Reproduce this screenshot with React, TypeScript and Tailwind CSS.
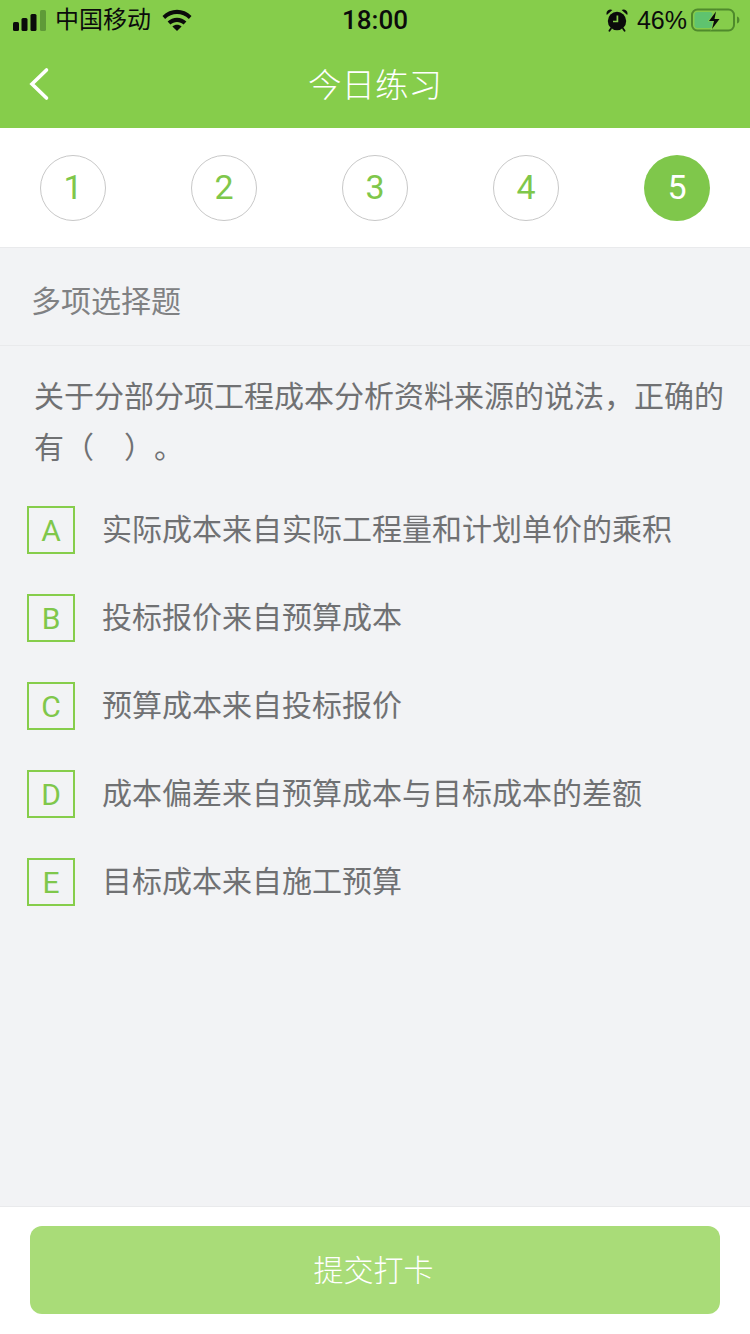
import React from 'react'

const cjk = '"Liberation Sans", "Noto Sans CJK SC", sans-serif'

const steps = [1, 2, 3, 4, 5]
const options = [
  { key: 'A', text: '实际成本来自实际工程量和计划单价的乘积' },
  { key: 'B', text: '投标报价来自预算成本' },
  { key: 'C', text: '预算成本来自投标报价' },
  { key: 'D', text: '成本偏差来自预算成本与目标成本的差额' },
  { key: 'E', text: '目标成本来自施工预算' },
]

function Signal() {
  return (
    <svg width="34" height="21" viewBox="0 0 34 21" className="shrink-0">
      <rect x="0" y="12" width="6" height="9" rx="1.5" fill="#0b0b0b" />
      <rect x="8.5" y="8" width="6" height="13" rx="1.5" fill="#0b0b0b" />
      <rect x="17.5" y="4" width="6" height="17" rx="1.5" fill="#0b0b0b" />
      <rect x="27" y="0" width="6" height="21" rx="1.5" fill="#5f9a38" />
    </svg>
  )
}

function Wifi() {
  return (
    <svg width="30" height="22" viewBox="0 0 30 22" className="shrink-0">
      <path d="M0.5 7C8.6-1.4 21.4-1.4 29.5 7l-2.6 3C20.2 3.4 9.8 3.4 3.1 10z" fill="#0b0b0b" />
      <path d="M5.6 12.6c5.2-5.2 13.6-5.2 18.8 0l-2.8 3c-3.6-3.4-9.6-3.4-13.2 0z" fill="#0b0b0b" />
      <path d="M10.4 17.6c2.6-2.4 6.6-2.4 9.2 0L15 22z" fill="#0b0b0b" />
    </svg>
  )
}

function Alarm() {
  return (
    <svg width="22" height="24" viewBox="0 0 22 24" className="shrink-0">
      <circle cx="11" cy="13" r="9.2" fill="#0b0b0b" />
      <path d="M0.8 7a4 4 0 0 1 5.6-5zM21.2 7a4 4 0 0 0-5.6-5z" fill="#0b0b0b" />
      <path d="M5 20.5l-1.6 2.2M17 20.5l1.6 2.2" stroke="#0b0b0b" strokeWidth="1.8" strokeLinecap="round" />
      <path d="M11.4 7.5v6H7" stroke="#86cd4b" strokeWidth="1.7" fill="none" />
    </svg>
  )
}

function Battery() {
  return (
    <svg width="49" height="24" viewBox="0 0 49 24" className="shrink-0">
      <rect x="1" y="1.5" width="42" height="21" rx="5.5" fill="none" stroke="#4f8a2c" strokeWidth="2" />
      <rect x="3.5" y="4" width="18" height="16" rx="3" fill="#5fc36f" />
      <path d="M46 8.5c1.8.6 2.4 1.8 2.4 3.5s-.6 2.9-2.4 3.5z" fill="#4f8a2c" />
      <path d="M25.5 1.5L16.5 13.5h5.5L19.5 23l9.5-12.5h-5.5z" fill="#86cd4b" />
      <path d="M25 3.5L18 13h5l-2 8l7.5-10h-5z" fill="#0b0b0b" />
    </svg>
  )
}

function StatusBar() {
  return (
    <div className="flex h-10 items-center text-[#0b0b0b]">
      <div className="flex flex-1 items-center pl-[13px]">
        <Signal />
        <span className="ml-2 text-[24px] leading-none">中国移动</span>
        <span className="ml-[11px]">
          <Wifi />
        </span>
      </div>
      <span className="pr-[3px] font-[Roboto] text-[26px] font-medium leading-none">18:00</span>
      <div className="flex flex-1 items-center justify-end pr-[10px]">
        <Alarm />
        <span className="ml-[9px] mr-[4px] text-[25px] leading-none">46%</span>
        <Battery />
      </div>
    </div>
  )
}

function NavBar() {
  return (
    <div className="relative flex h-[88px] items-center justify-center pt-[3px]">
      <button className="absolute left-[28px] top-[27px]" aria-label="返回">
        <svg width="22" height="34" viewBox="0 0 22 34">
          <path d="M18.5 3L4 17l14.5 14" fill="none" stroke="#fff" strokeWidth="3.6" strokeLinecap="round" />
        </svg>
      </button>
      <span className="text-[33.5px] font-light leading-none text-white">今日练习</span>
    </div>
  )
}

export default function App() {
  return (
    <div className="flex h-[1334px] w-[750px] flex-col overflow-hidden bg-[#f2f3f5]" style={{ fontFamily: cjk }}>
      <div className="bg-[#86cd4b]">
        <StatusBar />
        <NavBar />
      </div>

      <div className="flex h-[120px] items-center justify-between border-b border-[#e9eaec] bg-white px-10">
        {steps.map((n) => (
          <div
            key={n}
            className={
              n === 5
                ? 'flex h-[66px] w-[66px] items-center justify-center rounded-full bg-[#7fc74b] font-[Roboto] text-[34px] text-white'
                : 'flex h-[66px] w-[66px] items-center justify-center rounded-full border border-[#c8c8c8] font-[Roboto] text-[34px] text-[#7fc74b]'
            }
          >
            {n}
          </div>
        ))}
      </div>

      <div className="flex h-[98px] items-center border-b border-[#e9eaec] pl-[31px] pt-[10px] text-[30px] text-[#808183]">
        多项选择题
      </div>

      <p className="mt-[25px] pl-[34px] pr-[24px] text-[30px] leading-[51px] text-[#707173] [text-spacing-trim:space-all]">
        关于分部分项工程成本分析资料来源的说法，正确的有（　）。
      </p>

      <div className="mt-[33px] flex flex-col gap-10 pl-[27px]">
        {options.map((o) => (
          <div key={o.key} className="flex h-12 items-center">
            <div className="flex h-12 w-12 shrink-0 items-center justify-center border-2 border-[#86cd4b] font-[Roboto] text-[30px] text-[#7fc74b]">
              {o.key}
            </div>
            <span className="ml-[27px] text-[30px] leading-none text-[#707173]">{o.text}</span>
          </div>
        ))}
      </div>

      <div className="mt-auto h-[128px] border-t border-[#e9eaec] bg-white px-[30px] pt-[19px]">
        <button className="flex h-[88px] w-full items-center justify-center rounded-xl bg-[#a9dc78] pr-[3px] text-[30px] font-light text-white">
          提交打卡
        </button>
      </div>
    </div>
  )
}
